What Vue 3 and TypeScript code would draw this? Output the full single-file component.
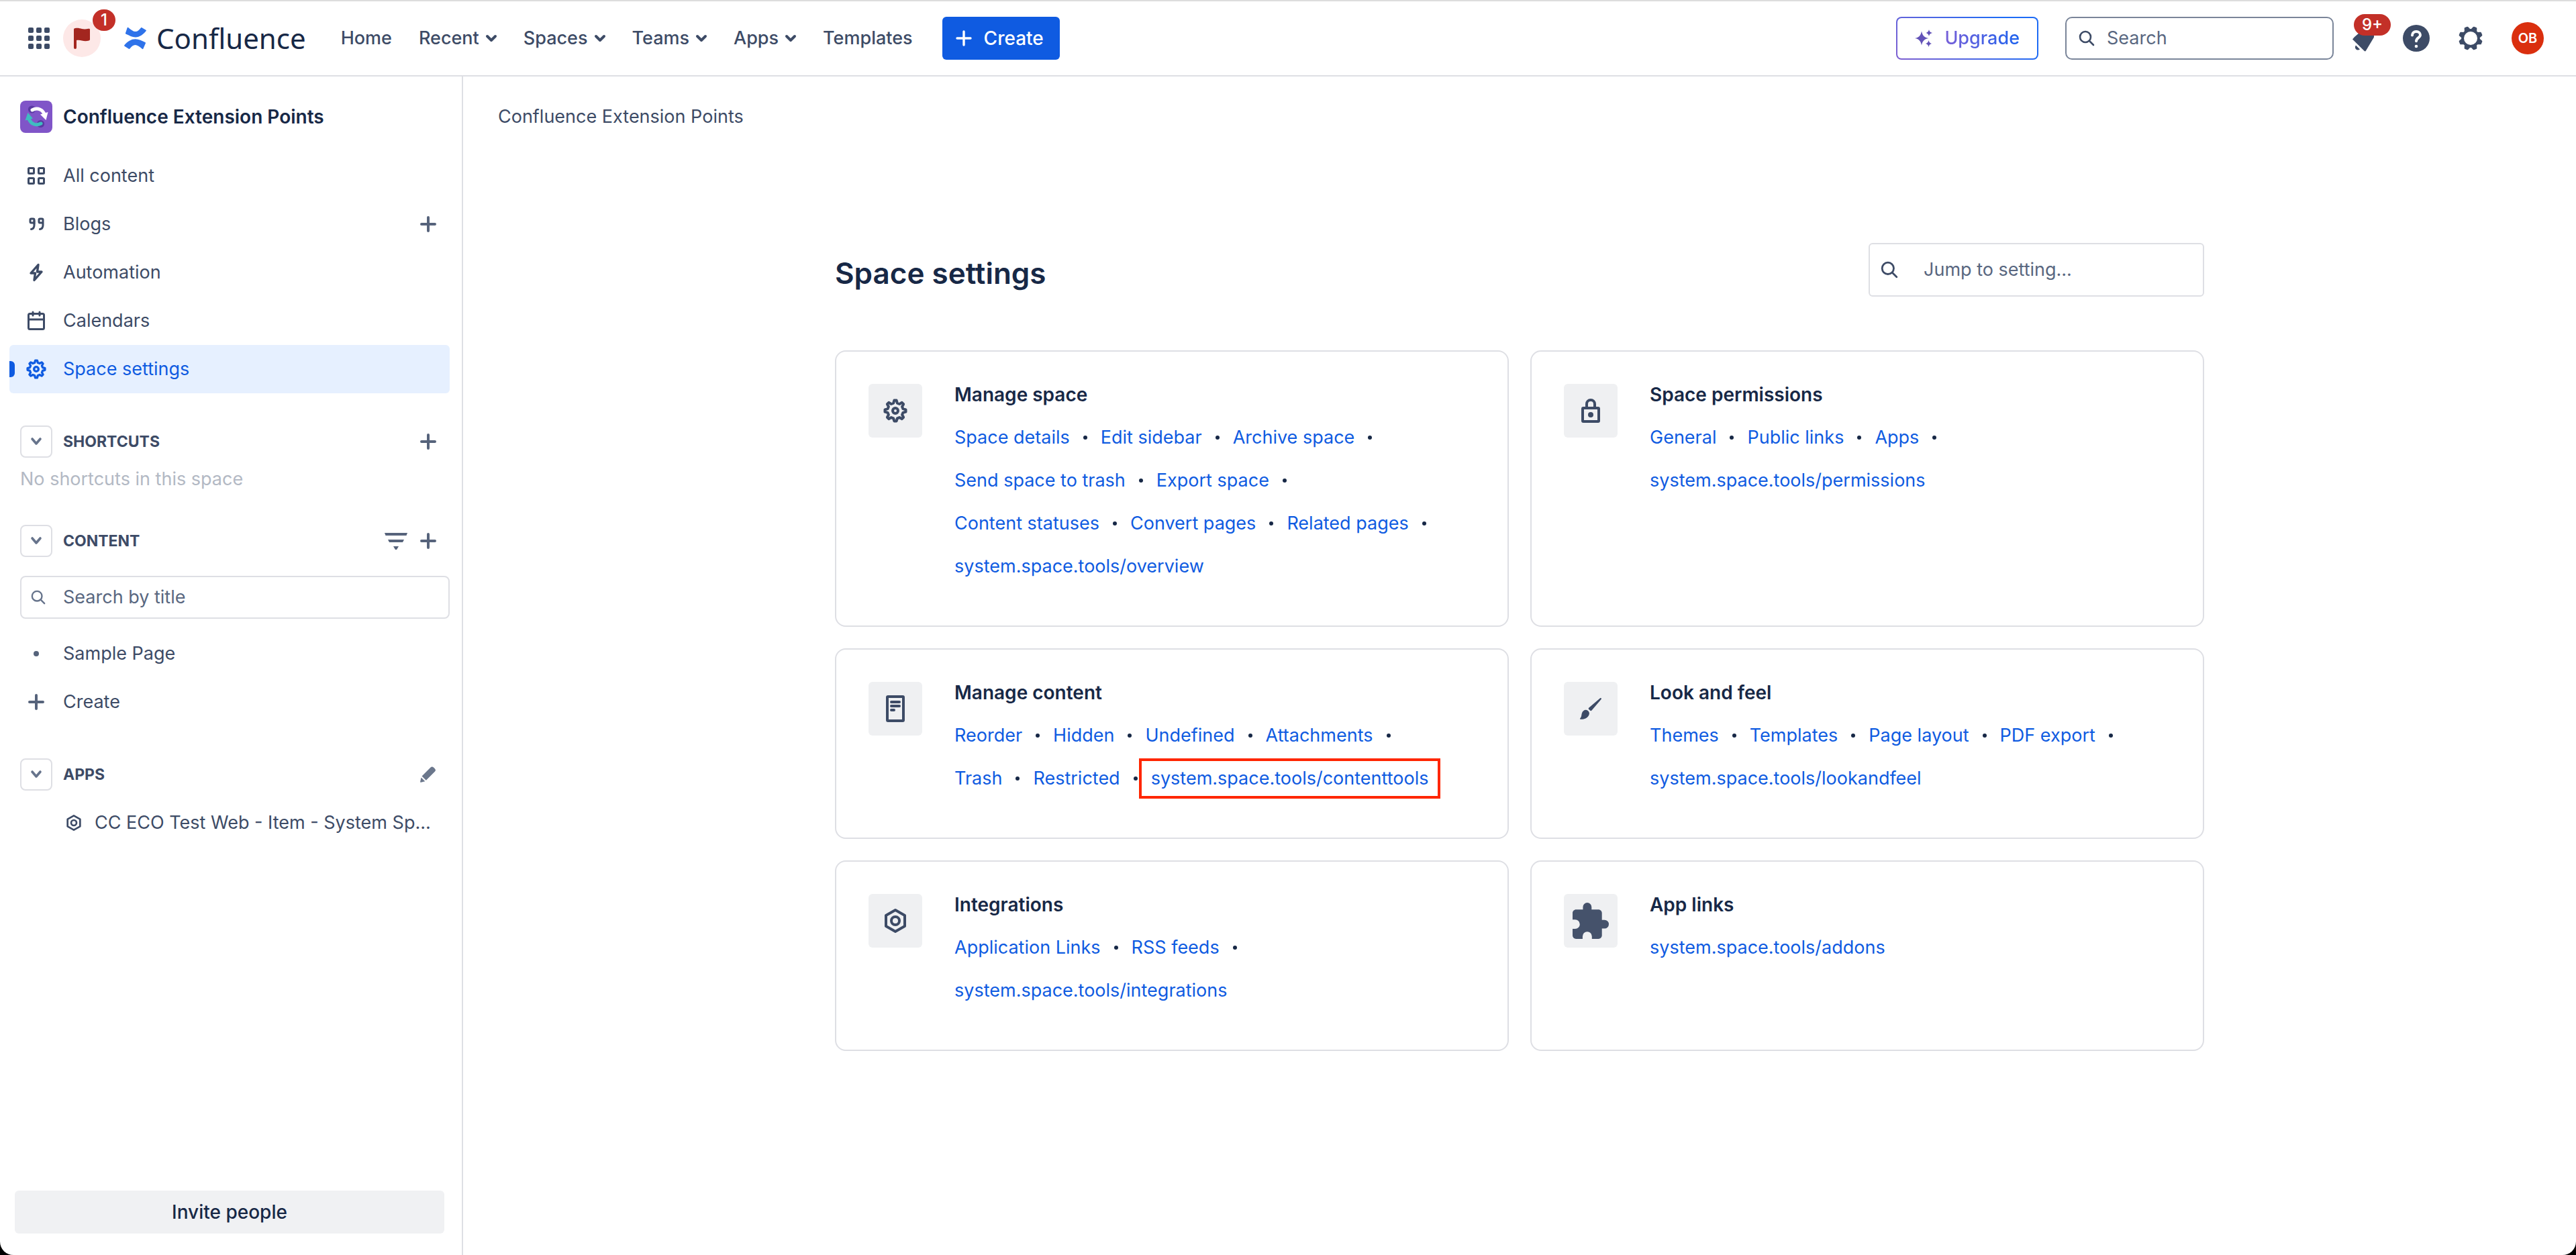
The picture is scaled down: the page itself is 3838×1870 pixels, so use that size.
<script setup lang="ts">
import { h } from 'vue'

interface IconDef {
  box: string
  body: string
}

interface SettingLink {
  label: string
  marked?: boolean
}

interface SettingCard {
  title: string
  icon: string
  size: [number, number]
  links: SettingLink[]
}

/* Closed outline of a cog: trapezoid teeth around a centre point. */
function cog(c: number, outer: number, inner: number, phase: number, tip: number, root: number): string {
  const points: string[] = []
  for (let i = 0; i < 8; i++) {
    const mid = ((i * 45 + phase) * Math.PI) / 180
    const corners: [number, number][] = [
      [inner, -root],
      [outer, -tip],
      [outer, tip],
      [inner, root],
    ]
    for (const [r, a] of corners) {
      const t = mid + (a * Math.PI) / 180
      points.push(`${(c + r * Math.sin(t)).toFixed(2)} ${(c - r * Math.cos(t)).toFixed(2)}`)
    }
  }
  return `M${points.join('L')}Z`
}

const line = 'fill="none" stroke="currentColor" stroke-linecap="round" stroke-linejoin="round"'

const icons: Record<string, IconDef> = {
  grid: {
    box: '0 0 32 32',
    body: [0, 12, 24]
      .map((y) => [0, 12, 24].map((x) => `<rect x="${x}" y="${y}" width="8" height="8" rx="2" fill="currentColor"/>`).join(''))
      .join(''),
  },
  flag: {
    box: '0 0 24 31',
    body: '<path fill="currentColor" d="M0 2C0 .8.8 0 2 0c4-.6 7 .2 10 1 3 .7 6 .6 9.500-.2C23 .4 24 .8 24 2v14.500c0 1-.6 1.700-1.600 2-3.400.9-7 .8-10.400 0-2.600-.7-5.200-.9-8-.5V29a2 2 0 0 1-4 0z"/>',
  },
  mark: {
    box: '0 0 33 32',
    body: '<g fill="#2f73ea"><path d="M4.600.4 2 8.200c-.2.700.100 1.300.8 1.600 4.800 2.100 9 4.700 14 4.700 6.500 0 11.500-4 15.900-9.400.4-.5.2-1-.3-1.400L26.500.2c-.6-.4-1.200-.3-1.600.2-2.700 3.300-5 5.700-8 5.700-3.300 0-6.800-2.800-10.500-5.900-.7-.6-1.500-.5-1.800.2z"/><path d="M28.400 31.600 31.900 23.600c.300-.7 0-1.300-.7-1.600-5-2.200-9.300-4.800-14.400-4.800C10.300 17.200 5 20.600.300 26.300c-.4.5-.3 1 .2 1.400l6.300 4c.6.400 1.200.3 1.600-.2 2.700-3.300 5-5.500 8-5.500 3.300 0 6.800 2.600 10.300 5.700.7.600 1.400.6 1.700-.1z"/></g>',
  },
  chevron: { box: '0 0 16 12', body: `<path ${line} stroke-width="4" d="M2 3l6 6 6-6"/>` },
  chevronSmall: { box: '0 0 16 12', body: `<path ${line} stroke-width="3.600" d="M2 2l6 7 6-7"/>` },
  plus: { box: '0 0 24 24', body: `<path ${line} stroke-width="4" d="M12 2v20M2 12h20"/>` },
  plusThin: { box: '0 0 24 24', body: `<path ${line} stroke-width="3.400" d="M12 2v20M2 12h20"/>` },
  sparkle: {
    box: '0 0 26 26',
    body: '<path fill="#6353b8" d="M10 2.500c1.500 6.500 3.500 9 10.500 10.500C13.500 14.500 11.500 17 10 23.500 8.500 17 6.500 14.500 0 13 6.500 11.500 8.500 9 10 2.500zM21 0c.8 3 1.800 4 5 5-3.200 1-4.200 2-5 5-.8-3-1.800-4-4.500-5C19.200 4 20.200 3 21 0zM20.500 16c.8 3 1.700 4 4.500 5-2.800 1-3.700 2-4.500 5-.8-3-1.700-4-4.500-5 2.800-1 3.700-2 4.500-5z"/>',
  },
  search: { box: '0 0 24 24', body: `<g ${line} stroke-width="2.600"><circle cx="10" cy="10" r="8"/><path d="M16 16l6 6"/></g>` },
  bell: {
    box: '0 0 32 40',
    body: '<path fill="currentColor" d="M0 21.500 3 18l14-12h15v12.500L20 38.500c-.6 1-1.500 1.200-2.300.4zM5 30.500l6 6c-2 1.600-4.500 1.200-6-.3-1.500-1.600-1.500-4 0-5.700z"/>',
  },
  help: {
    box: '0 0 40 40',
    body: '<circle cx="20" cy="20" r="20" fill="currentColor"/><path fill="none" stroke="#fff" stroke-width="4" stroke-linecap="round" d="M14 15.500c0-3.600 2.700-5.500 6-5.500s6 2.100 6 5.200c0 3.900-6 4-6 9"/><circle cx="20" cy="32" r="2.300" fill="#fff"/>',
  },
  gearSolid: {
    box: '0 0 36 36',
    body: `<path fill="currentColor" stroke="currentColor" stroke-width="3" stroke-linejoin="round" fill-rule="evenodd" d="${cog(18, 16.5, 12.5, 22.5, 6, 15)}"/><circle cx="18" cy="18" r="10" fill="#fff"/>`,
  },
  space: {
    box: '0 0 48 48',
    body: '<rect width="48" height="48" rx="8" fill="#8055c8"/><g fill="none" stroke-linecap="round"><circle cx="17.500" cy="13" r="5.600" fill="#5a3aa3"/><circle cx="30.500" cy="34.500" r="5.600" fill="#5a3aa3"/><path d="M18 14c8-4.500 16-.5 18.500 7" stroke="#fff" stroke-width="5"/><path d="M31 34c-7 4-15 1-18-7" stroke="#3fbcc0" stroke-width="5"/></g><path d="M30 20.500 41.500 17 38.500 29z" fill="#fff"/><path d="M11.500 18 7.500 29.500 19 26.500z" fill="#3fbcc0"/>',
  },
  tiles: {
    box: '0 0 28 28',
    body: `<g ${line} stroke-width="3"><rect x="2.500" y="2.500" width="8" height="8" rx="1"/><rect x="17.500" y="2.500" width="8" height="8" rx="1"/><rect x="2.500" y="17.500" width="8" height="8" rx="1"/><rect x="17.500" y="17.500" width="8" height="8" rx="1"/></g>`,
  },
  quotes: {
    box: '0 0 28 28',
    body: `<g ${line} stroke-width="3"><path d="M11 10.500v-3a1.500 1.500 0 0 0-1.500-1.500H6.500A1.500 1.500 0 0 0 5 7.500v3A1.500 1.500 0 0 0 6.500 12H11v3.500c0 3-1.500 5.500-4.500 6"/><path d="M11 9v4M24 10.500v-3A1.500 1.500 0 0 0 22.500 6h-3A1.500 1.500 0 0 0 18 7.500v3a1.500 1.500 0 0 0 1.500 1.500H24v3.500c0 3-1.500 5.500-4.500 6M24 9v4"/></g>`,
  },
  bolt: { box: '0 0 28 28', body: `<path ${line} stroke-width="3.400" d="M17 2.500 6 15h6.500L11 25.500 22 13h-6.500z"/>` },
  calendar: {
    box: '0 0 28 30',
    body: `<g ${line} stroke-width="3"><rect x="2.500" y="4.500" width="23" height="23" rx="2"/><path d="M9 2v5M19 2v5M3 13h22"/></g>`,
  },
  gear: {
    box: '0 0 36 36',
    body: `<path ${line} stroke-width="4" d="${cog(18, 15.6, 11.8, 0, 6, 14)}"/><circle cx="18" cy="18" r="4" fill="none" stroke="currentColor" stroke-width="4"/>`,
  },
  filter: {
    box: '0 0 34 26',
    body: '<path fill="currentColor" d="M0 1h34l-1.500 4h-31zM5 11h24l-2 4H7zM13 21h8l-3 5h-2z"/>',
  },
  dot: { box: '0 0 8 8', body: '<circle cx="4" cy="4" r="4" fill="currentColor"/>' },
  pencil: {
    box: '0 0 24 24',
    body: '<path fill="currentColor" d="M2.500 14.500 15.500 1.500c1.500-1.500 3-1.500 4.500 0l1.800 1.800c1.500 1.500 1.500 3 0 4.500l-13 13zM1.500 16.500l5.800 5.800-6.300 1.500c-.7 0-1-.4-.9-1z"/>',
  },
  hexagon: {
    box: '0 0 32 36',
    body: `<g ${line} stroke-width="4"><path d="M16 2l14 8v16l-14 8-14-8V10z"/><circle cx="16" cy="18" r="6"/></g>`,
  },
  lock: {
    box: '0 0 28 36',
    body: `<g ${line} stroke-width="4"><rect x="2" y="14" width="24" height="20" rx="1"/><path d="M8 14V8a6 6 0 0 1 12 0v6"/></g><circle cx="14" cy="24" r="4" fill="currentColor"/>`,
  },
  page: {
    box: '0 0 28 40',
    body: `<g ${line} stroke-width="4"><rect x="2" y="2" width="24" height="36" rx="1"/><path d="M8 10h12M8 16h12M8 22h4"/></g>`,
  },
  brush: {
    box: '0 0 32 32',
    body: '<path fill="currentColor" d="M31.500.3c.7.500.5 1.200.1 1.800L17.500 18.500c-.8.900-1.700.9-2.500.1l-1.700-1.700c-.8-.8-.8-1.700.1-2.500L29.800.4c.6-.4 1.200-.5 1.700-.1zM11.500 18.800c2.500 2 3.300 4.400 1.300 7.700C10.500 30.500 6 32 .8 31.700c-.8 0-1-.6-.6-1.200 2.300-2.400 1.800-4.500 2.600-7.500 1.200-4.300 5.500-6.500 8.700-4.200z"/>',
  },
  puzzle: {
    box: '2 1 21 21',
    body: '<path fill="#45526b" d="M20.500 11H19V7c0-1.100-.9-2-2-2h-4V3.500a2.500 2.500 0 0 0-5 0V5H4c-1.100 0-2 .9-2 2v3.800h1.500a2.700 2.700 0 0 1 0 5.400H2V20c0 1.100.9 2 2 2h3.800v-1.500a2.700 2.700 0 0 1 5.400 0V22H17c1.100 0 2-.9 2-2v-4h1.500a2.500 2.500 0 0 0 0-5z"/>',
  },
}

const Icon = (props: { name: string; w: number; h?: number }) =>
  h('svg', {
    width: props.w,
    height: props.h ?? props.w,
    viewBox: icons[props.name].box,
    'aria-hidden': 'true',
    innerHTML: icons[props.name].body,
  })
Icon.props = ['name', 'w', 'h']

const menus = ['Recent', 'Spaces', 'Teams', 'Apps']

const spaceNav = [
  { label: 'All content', icon: 'tiles', w: 28, h: 28 },
  { label: 'Blogs', icon: 'quotes', w: 28, h: 28, add: true },
  { label: 'Automation', icon: 'bolt', w: 28, h: 28 },
  { label: 'Calendars', icon: 'calendar', w: 28, h: 30 },
  { label: 'Space settings', icon: 'gear', w: 30, h: 30, active: true },
]

const toLinks = (...labels: string[]): SettingLink[] => labels.map((label) => ({ label }))

const cards: SettingCard[] = [
  {
    title: 'Manage space',
    icon: 'gear',
    size: [36, 36],
    links: toLinks(
      'Space details',
      'Edit sidebar',
      'Archive space',
      'Send space to trash',
      'Export space',
      'Content statuses',
      'Convert pages',
      'Related pages',
      'system.space.tools/overview',
    ),
  },
  {
    title: 'Space permissions',
    icon: 'lock',
    size: [28, 36],
    links: toLinks('General', 'Public links', 'Apps', 'system.space.tools/permissions'),
  },
  {
    title: 'Manage content',
    icon: 'page',
    size: [28, 40],
    links: [
      ...toLinks('Reorder', 'Hidden', 'Undefined', 'Attachments', 'Trash', 'Restricted'),
      { label: 'system.space.tools/contenttools', marked: true },
    ],
  },
  {
    title: 'Look and feel',
    icon: 'brush',
    size: [32, 32],
    links: toLinks('Themes', 'Templates', 'Page layout', 'PDF export', 'system.space.tools/lookandfeel'),
  },
  {
    title: 'Integrations',
    icon: 'hexagon',
    size: [32, 36],
    links: toLinks('Application Links', 'RSS feeds', 'system.space.tools/integrations'),
  },
  {
    title: 'App links',
    icon: 'puzzle',
    size: [54, 54],
    links: toLinks('system.space.tools/addons'),
  },
]
</script>

<template>
  <div class="app">
    <header class="topbar">
      <button class="plain switcher" aria-label="Switch to"><Icon name="grid" :w="32" /></button>
      <button class="plain flag" aria-label="Alerts">
        <Icon name="flag" :w="24" :h="31" />
        <span class="badge">1</span>
      </button>
      <a class="brand" href="#"><Icon name="mark" :w="33" :h="32" /><span>Confluence</span></a>
      <nav class="menu" aria-label="Main">
        <a href="#">Home</a>
        <button v-for="m in menus" :key="m" class="plain">{{ m }}<Icon name="chevron" :w="16" :h="12" /></button>
        <a href="#">Templates</a>
      </nav>
      <button class="create"><Icon name="plusThin" :w="24" />Create</button>
      <div class="tools">
        <button class="upgrade"><Icon name="sparkle" :w="26" /><span>Upgrade</span></button>
        <label class="search">
          <Icon name="search" :w="24" />
          <input type="text" placeholder="Search" aria-label="Search" />
        </label>
        <button class="plain bell" aria-label="Notifications">
          <Icon name="bell" :w="32" :h="40" />
          <span class="badge">9+</span>
        </button>
        <button class="plain" aria-label="Help"><Icon name="help" :w="40" /></button>
        <button class="plain" aria-label="Settings"><Icon name="gearSolid" :w="36" /></button>
        <button class="avatar">OB</button>
      </div>
    </header>

    <div class="body">
      <aside class="sidebar">
        <a class="space" href="#"><Icon name="space" :w="48" /><span>Confluence Extension Points</span></a>
        <nav aria-label="Space">
          <div v-for="item in spaceNav" :key="item.label" class="row" :class="{ active: item.active }">
            <a href="#"><span class="cell"><Icon :name="item.icon" :w="item.w" :h="item.h" /></span>{{ item.label }}</a>
            <button v-if="item.add" class="plain action" aria-label="Add blog post"><Icon name="plus" :w="24" /></button>
          </div>
        </nav>

        <section>
          <div class="heading">
            <button class="toggle" aria-label="Collapse shortcuts"><Icon name="chevronSmall" :w="16" :h="12" /></button>
            <h2>SHORTCUTS</h2>
            <button class="plain action" aria-label="Add shortcut"><Icon name="plus" :w="24" /></button>
          </div>
          <p class="empty">No shortcuts in this space</p>
        </section>

        <section>
          <div class="heading">
            <button class="toggle" aria-label="Collapse content"><Icon name="chevronSmall" :w="16" :h="12" /></button>
            <h2>CONTENT</h2>
            <button class="plain action" aria-label="Filter"><Icon name="filter" :w="34" :h="26" /></button>
            <button class="plain action" aria-label="Add content"><Icon name="plus" :w="24" /></button>
          </div>
          <label class="title-search">
            <Icon name="search" :w="22" />
            <input type="text" placeholder="Search by title" aria-label="Search by title" />
          </label>
          <div class="row"><a href="#"><span class="cell soft"><Icon name="dot" :w="8" /></span>Sample Page</a></div>
          <div class="row"><a href="#"><span class="cell soft"><Icon name="plus" :w="24" /></span>Create</a></div>
        </section>

        <section>
          <div class="heading">
            <button class="toggle" aria-label="Collapse apps"><Icon name="chevronSmall" :w="16" :h="12" /></button>
            <h2>APPS</h2>
            <button class="plain action pencil" aria-label="Edit apps"><Icon name="pencil" :w="24" /></button>
          </div>
          <div class="row nested">
            <a href="#"><Icon name="hexagon" :w="22" :h="24" /><span>CC ECO Test Web - Item - System Sp...</span></a>
          </div>
        </section>

        <button class="invite">Invite people</button>
      </aside>

      <main class="main">
        <nav class="crumbs" aria-label="Breadcrumb"><a href="#">Confluence Extension Points</a></nav>
        <div class="content">
          <div class="title-bar">
            <h1>Space settings</h1>
            <label class="jump">
              <Icon name="search" :w="26" />
              <input type="text" placeholder="Jump to setting..." aria-label="Jump to setting" />
            </label>
          </div>
          <div class="cards">
            <section v-for="card in cards" :key="card.title" class="card">
              <span class="tile"><Icon :name="card.icon" :w="card.size[0]" :h="card.size[1]" /></span>
              <div class="card-body">
                <h3>{{ card.title }}</h3>
                <ul>
                  <li v-for="link in card.links" :key="link.label">
                    <a href="#" :class="{ marked: link.marked }">{{ link.label }}</a>
                  </li>
                </ul>
              </div>
            </section>
          </div>
        </div>
      </main>
    </div>
  </div>
</template>

<style>
body {
  background: #000;
}
</style>

<style scoped>
.app {
  box-sizing: border-box;
  display: flex;
  flex-direction: column;
  min-height: 100vh;
  background: #fff;
  border-radius: 0 0 20px 20px;
  color: #3d4b66;
  font: 400 27px/40px Inter, "Liberation Sans", sans-serif;
}
.app *,
.app *::before,
.app *::after {
  box-sizing: border-box;
}
svg {
  display: block;
  flex: none;
  overflow: visible;
}
a {
  color: inherit;
  text-decoration: none;
}
button,
input {
  font: inherit;
  color: inherit;
  margin: 0;
}
button {
  display: flex;
  align-items: center;
  justify-content: center;
  cursor: pointer;
}
input {
  flex: 1;
  min-width: 0;
  padding: 0;
  border: 0;
  outline: 0;
  background: none;
}
input::placeholder {
  color: #596780;
  opacity: 1;
}
.plain {
  padding: 0;
  border: 0;
  background: none;
}

.topbar {
  display: flex;
  align-items: center;
  height: 114px;
  padding: 0 48px 0 42px;
  border-top: 2px solid #dddddd;
  border-bottom: 2px solid #dedfe4;
  font-weight: 500;
}
.flag {
  position: relative;
  width: 56px;
  height: 56px;
  margin-left: 20px;
  border-radius: 50%;
  background: #fde8e7;
  color: #a3261f;
}
.badge {
  position: absolute;
  top: -15px;
  left: 44px;
  height: 32px;
  padding: 0 12px;
  border-radius: 16px;
  background: #c33028;
  color: #fff;
  font-size: 24px;
  line-height: 32px;
}
.brand {
  display: flex;
  align-items: center;
  gap: 15px;
  margin-left: 35px;
  color: #172846;
  font: 400 42px/56px "Noto Sans", "Open Sans", sans-serif;
}
.menu {
  display: flex;
  gap: 40px;
  margin-left: 52px;
}
.menu button {
  gap: 10px;
}
.create {
  gap: 18px;
  height: 64px;
  margin-left: 44px;
  padding: 0 24px 0 20px;
  border: 0;
  border-radius: 6px;
  background: #0f5be1;
  color: #fff;
  font-size: 28px;
}
.tools {
  display: flex;
  align-items: center;
  gap: 43px;
  margin-left: auto;
}
.upgrade {
  gap: 18px;
  height: 64px;
  margin-right: -3px;
  padding: 0 26px;
  border: 2px solid transparent;
  border-radius: 8px;
  background: linear-gradient(#fff, #fff) padding-box, linear-gradient(45deg, #7f5fd0, #1d6bf5 80%) border-box;
}
.upgrade span {
  background: linear-gradient(90deg, #7860d8, #1d62ee);
  background-clip: text;
  color: transparent;
}
.search {
  display: flex;
  align-items: center;
  gap: 18px;
  width: 400px;
  height: 64px;
  margin-right: -15px;
  padding: 0 18px;
  border: 2px solid #7a8599;
  border-radius: 10px;
  font-weight: 400;
}
.bell {
  position: relative;
}
.bell .badge {
  top: -16px;
  left: 2px;
}
.avatar {
  width: 48px;
  height: 48px;
  padding: 0;
  border: 0;
  border-radius: 50%;
  background: #da2f0e;
  color: #fff;
  font-size: 20px;
  font-weight: 600;
}

.body {
  display: flex;
  flex: 1;
}
.sidebar {
  display: flex;
  flex-direction: column;
  flex: none;
  width: 690px;
  padding: 36px 18px 32px 14px;
  border-right: 2px solid #dedfe4;
}
.space {
  display: flex;
  align-items: center;
  gap: 16px;
  height: 48px;
  margin-bottom: 28px;
  padding-left: 16px;
  color: #172846;
  font-size: 28px;
  font-weight: 600;
}
.row {
  position: relative;
  display: flex;
  align-items: center;
  height: 72px;
  padding: 0 16px;
  border-radius: 6px;
}
.row a {
  display: flex;
  align-items: center;
  flex: 1;
  min-width: 0;
  gap: 16px;
  white-space: nowrap;
}
.active {
  background: #e6f0ff;
  color: #0f5be1;
}
.active::before {
  content: "";
  position: absolute;
  left: 0;
  width: 8px;
  height: 24px;
  border-radius: 0 6px 6px 0;
  background: #0f5be1;
}
.cell {
  display: flex;
  justify-content: center;
  width: 48px;
}
.soft,
.action {
  color: #56637b;
}
.action {
  width: 32px;
  height: 32px;
}
.pencil {
  color: #6b778c;
}
.sidebar section {
  margin-top: 48px;
}
.heading {
  display: flex;
  align-items: center;
  gap: 16px;
  height: 48px;
  padding: 0 16px;
}
h2 {
  flex: 1;
  margin: 0;
  font-size: 23px;
  font-weight: 700;
}
.toggle {
  width: 48px;
  height: 48px;
  padding: 0;
  border: 2px solid #dedfe4;
  border-radius: 8px;
  background: #fff;
  color: #67748c;
}
.empty {
  margin: 12px 16px 0;
  color: #b3b9c4;
}
.title-search {
  display: flex;
  align-items: center;
  gap: 26px;
  height: 64px;
  margin: 28px 0 16px 16px;
  padding: 0 14px;
  border: 2px solid #dedfe4;
  border-radius: 8px;
  color: #67748c;
}
.nested {
  margin-top: 12px;
  padding: 0 16px 0 85px;
}
.nested a {
  gap: 20px;
}
.invite {
  height: 64px;
  margin: auto 8px 0;
  border: 0;
  border-radius: 6px;
  background: #f0f1f3;
  color: #172846;
  font-size: 28px;
  font-weight: 500;
}

.main {
  flex: 1;
  padding: 40px 52px;
}
.content {
  max-width: 2040px;
  margin: 168px auto 0;
}
.title-bar {
  display: flex;
  justify-content: space-between;
  align-items: center;
  margin-bottom: 80px;
}
h1 {
  margin: 10px 0 0;
  color: #172846;
  font-size: 44px;
  font-weight: 600;
  line-height: 56px;
}
.jump {
  display: flex;
  align-items: center;
  gap: 38px;
  width: 500px;
  height: 80px;
  padding: 0 16px;
  border: 2px solid #dedfe4;
  border-radius: 6px;
}
.cards {
  display: grid;
  grid-template-columns: repeat(2, minmax(0, 1fr));
  gap: 32px;
}
.card {
  display: flex;
  gap: 48px;
  padding: 48px 48px 56px;
  border: 2px solid #dedfe4;
  border-radius: 16px;
}
.tile {
  display: flex;
  align-items: center;
  justify-content: center;
  flex: none;
  width: 80px;
  height: 80px;
  border-radius: 6px;
  background: #eff0f2;
}
.card-body {
  flex: 1;
  min-width: 0;
}
h3 {
  margin: 0 0 16px;
  color: #172846;
  font-size: 28px;
  font-weight: 600;
  line-height: 32px;
}
ul {
  display: flex;
  flex-wrap: wrap;
  margin: 0;
  padding: 0;
  list-style: none;
  line-height: 64px;
}
li {
  display: flex;
  align-items: center;
  color: #0f5be1;
}
li:not(:last-child)::after {
  content: "";
  width: 6px;
  height: 6px;
  margin: 0 20px;
  border-radius: 50%;
  background: #172846;
}
.marked {
  position: relative;
}
.marked::after {
  content: "";
  position: absolute;
  inset: 2px -18px;
  border: 4px solid #ff2600;
}
</style>
